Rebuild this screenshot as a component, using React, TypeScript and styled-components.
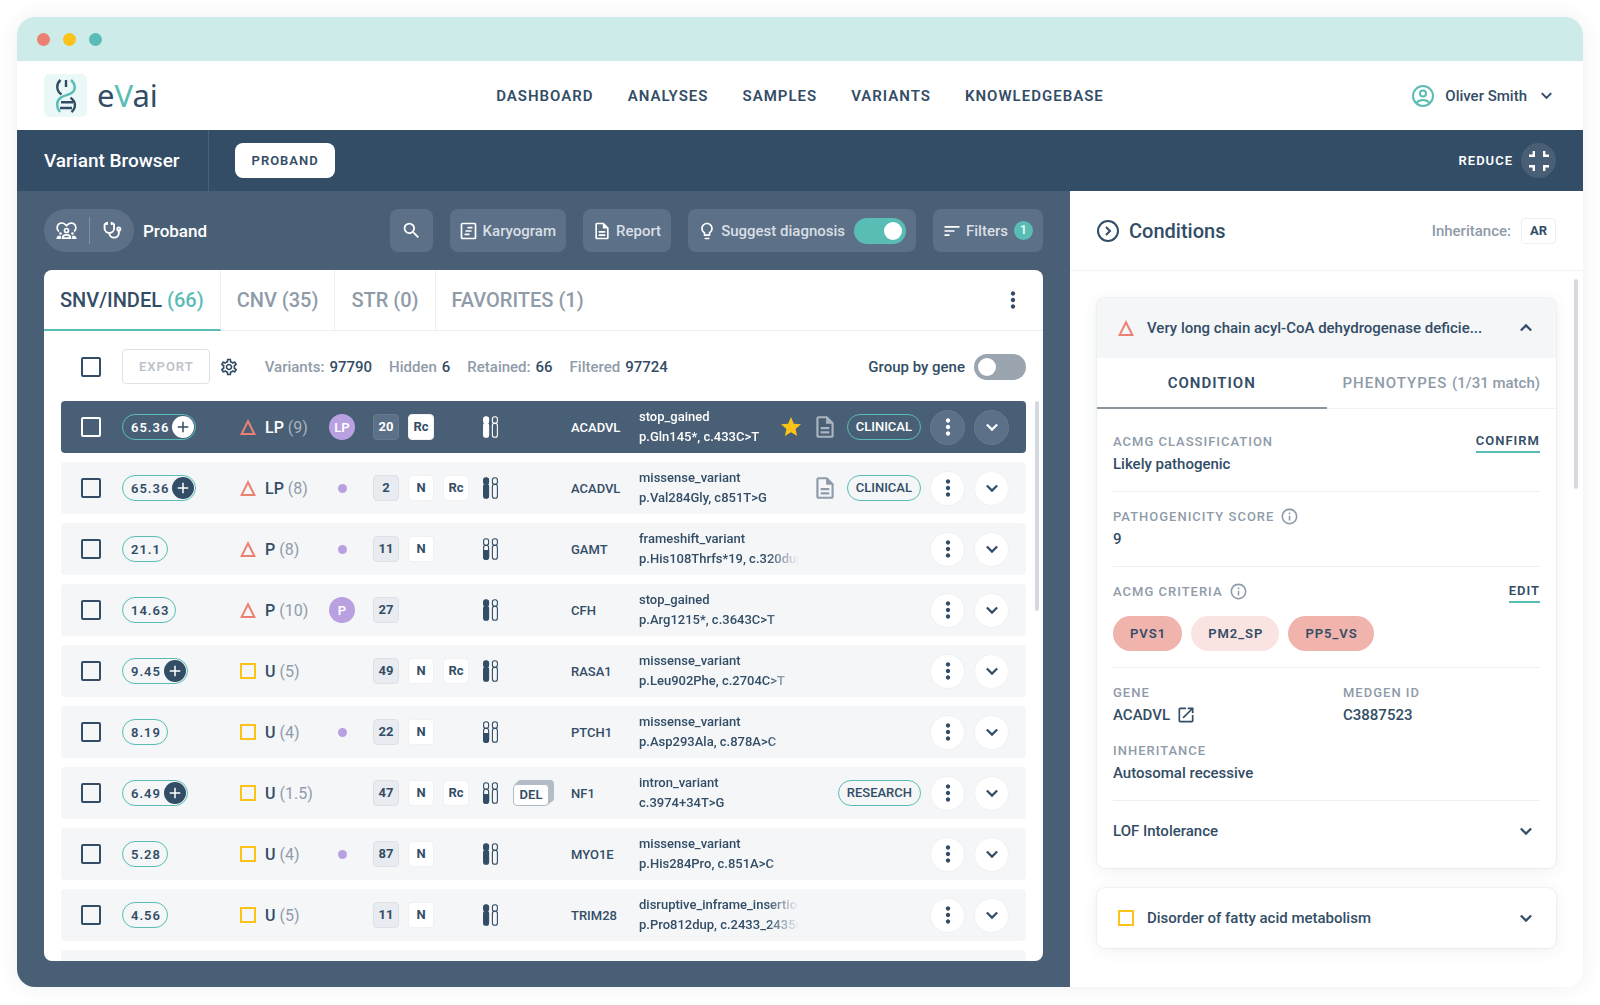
import React from "react";
import styled, { createGlobalStyle, css } from "styled-components";
import {
  MdAdd,
  MdLightbulbOutline,
  MdMoreVert,
  MdOpenInNew,
  MdOutlineDescription,
  MdOutlineInfo,
  MdOutlineSettings,
  MdSearch,
  MdSort,
  MdStar,
} from "react-icons/md";
import { Stethoscope } from "lucide-react";

const c = {
  navy: "#334d66",
  slate: "#495f76",
  slateSoft: "#5c7087",
  teal: "#5abdb5",
  mint: "#cdebe9",
  grey: "#8f9ba9",
  line: "#eceff1",
  row: "#f4f6f8",
  red: "#ec8173",
  yellow: "#fbc21a",
  purple: "#b9a1e1",
};

const GlobalStyle = createGlobalStyle`
  *, *::before, *::after { box-sizing: border-box; }
  body {
    margin: 0;
    background: #fff;
    color: ${c.navy};
    font-family: Roboto, "Liberation Sans", sans-serif;
    font-size: 15px;
    font-weight: 500;
  }
  button {
    font: inherit;
    color: inherit;
    background: none;
    border: 0;
    padding: 0;
    cursor: pointer;
  }
  a { color: inherit; text-decoration: none; }
  svg { display: block; flex: none; }
`;

/* ---------- Shell ---------- */

const Page = styled.div`
  height: 100vh;
  min-height: 1005px;
  padding: 17px 17px 18px;
`;

const Window = styled.div`
  height: 100%;
  display: flex;
  flex-direction: column;
  border-radius: 18px;
  overflow: hidden;
  background: #fff;
  box-shadow: 0 0 20px rgba(40, 50, 60, 0.08);
`;

const TitleBar = styled.div`
  flex: none;
  height: 44px;
  display: flex;
  align-items: center;
  gap: 13px;
  padding: 0 20px;
  background: ${c.mint};
`;

const Dot = styled.span<{ $color: string }>`
  width: 13px;
  height: 13px;
  border-radius: 50%;
  background: ${(p) => p.$color};
`;

const Header = styled.header`
  flex: none;
  height: 69px;
  display: grid;
  grid-template-columns: 1fr auto 1fr;
  align-items: center;
  padding: 0 27px;
`;

const Brand = styled.a`
  display: flex;
  align-items: center;
  gap: 10px;
`;

const BrandMark = styled.span`
  width: 43px;
  height: 43px;
  display: grid;
  place-items: center;
  border-radius: 5px;
  background: #ebf8f8;
`;

const BrandName = styled.span`
  font-family: "Noto Sans", sans-serif;
  font-size: 31px;
  font-weight: 400;
  line-height: 43px;
  em {
    font-style: normal;
    color: ${c.teal};
  }
`;

const Nav = styled.nav`
  display: flex;
  gap: 34px;
  font-size: 15px;
  font-weight: 600;
  letter-spacing: 1px;
`;

const UserButton = styled.button`
  justify-self: end;
  display: flex;
  align-items: center;
  gap: 11px;
  padding-right: 4px;
  svg:last-child { margin-left: 3px; }
`;

const SubBar = styled.div`
  flex: none;
  height: 61px;
  display: flex;
  align-items: stretch;
  padding: 0 27px;
  background: ${c.navy};
  color: #fff;
`;

const PageTitle = styled.h1`
  margin: 0;
  padding-right: 28px;
  border-right: 1px solid ${c.slate};
  font-size: 19px;
  font-weight: 500;
  line-height: 61px;
`;

const CapsButton = styled.button`
  font-size: 13px;
  font-weight: 600;
  letter-spacing: 1px;
`;

const ProbandButton = styled(CapsButton)`
  align-self: center;
  height: 35px;
  margin-left: 26px;
  padding: 0 16px 0 17px;
  border-radius: 8px;
  background: #fff;
  color: ${c.navy};
`;

const ReduceButton = styled(CapsButton)`
  margin-left: auto;
  display: flex;
  align-items: center;
  gap: 8px;
  color: #fff;
  span {
    width: 35px;
    height: 35px;
    display: grid;
    place-items: center;
    border-radius: 50%;
    background: ${c.slate};
  }
`;

const Body = styled.div`
  flex: 1;
  min-height: 0;
  display: grid;
  grid-template-columns: minmax(0, 1053fr) minmax(0, 513fr);
`;

/* ---------- Variant browser ---------- */

const Main = styled.main`
  display: flex;
  flex-direction: column;
  min-height: 0;
  padding: 0 27px 26px;
  background: ${c.slate};
`;

const Toolbar = styled.div`
  flex: none;
  height: 79px;
  display: flex;
  align-items: center;
  gap: 17px;
`;

const ViewSwitch = styled.div`
  height: 43px;
  display: flex;
  align-items: center;
  border-radius: 22px;
  background: ${c.slateSoft};
  color: #fff;
  button {
    width: 45px;
    height: 27px;
    display: grid;
    place-items: center;
  }
  button + button {
    border-left: 1px solid #7f8fa1;
  }
`;

const ViewName = styled.h2`
  flex: 1;
  margin: 0 0 0 -8px;
  color: #fff;
  font-size: 17px;
  font-weight: 500;
`;

const toolSurface = css`
  height: 43px;
  display: flex;
  align-items: center;
  gap: 4px;
  padding: 0 10px 0 9px;
  border-radius: 8px;
  background: ${c.slateSoft};
  color: #d9dfe5;
  svg { color: #fff; }
`;

const ToolButton = styled.button`
  ${toolSurface}
`;

const ToolLabel = styled.label`
  ${toolSurface}
  cursor: pointer;
`;

const SearchButton = styled(ToolButton)`
  padding: 0 11px;
`;

const Count = styled.span`
  width: 19px;
  height: 19px;
  margin-left: 2px;
  border-radius: 50%;
  background: ${c.teal};
  color: #fff;
  font-size: 12px;
  line-height: 19px;
  text-align: center;
`;

const Switch = styled.input`
  appearance: none;
  flex: none;
  width: 52px;
  height: 26px;
  margin: 0 0 0 5px;
  padding: 4px;
  display: flex;
  border-radius: 13px;
  background: #9aa5b0;
  cursor: pointer;
  &::before {
    content: "";
    width: 18px;
    height: 18px;
    border-radius: 50%;
    background: #fff;
  }
  &:checked {
    justify-content: flex-end;
    background: ${c.teal};
  }
`;

const Card = styled.section`
  flex: 1;
  min-height: 0;
  display: flex;
  flex-direction: column;
  border-radius: 8px;
  overflow: hidden;
  background: #fff;
`;

const TabBar = styled.div`
  flex: none;
  height: 61px;
  display: flex;
  padding-right: 17px;
  border-bottom: 1px solid ${c.line};
`;

const Tab = styled.button<{ $active?: boolean }>`
  height: 61px;
  padding: 0 16px;
  border-right: 1px solid ${c.line};
  border-bottom: 2px solid ${(p) => (p.$active ? c.teal : "transparent")};
  color: ${(p) => (p.$active ? c.navy : c.grey)};
  font-size: 20px;
  font-weight: 500;
  span { color: ${c.teal}; }
  &:nth-last-of-type(2) { border-right: 0; }
`;

const TabMenu = styled.button`
  margin-left: auto;
`;

const ListControls = styled.div`
  flex: none;
  display: flex;
  align-items: center;
  padding: 18px 17px 8px 37px;
`;

const CheckBox = styled.input<{ $light?: boolean }>`
  appearance: none;
  display: block;
  flex: none;
  width: 20px;
  height: 20px;
  margin: 0;
  border: 2px solid ${(p) => (p.$light ? "#fff" : c.navy)};
  border-radius: 2px;
  cursor: pointer;
  &:checked { background: ${c.teal}; }
`;

const ExportButton = styled(CapsButton)`
  height: 35px;
  margin: 0 9px 0 21px;
  padding: 0 15px 0 16px;
  border: 1px solid #dfe2e5;
  border-radius: 4px;
  color: #bcc3ca;
`;

const Stats = styled.div`
  flex: 1;
  display: flex;
  gap: 17px;
  margin-left: 26px;
  color: ${c.grey};
  span {
    display: flex;
    gap: 5px;
  }
  strong {
    color: ${c.navy};
    font-weight: 500;
  }
`;

const GroupLabel = styled.label`
  display: flex;
  align-items: center;
  gap: 4px;
`;

const ListArea = styled.div`
  flex: 1;
  min-height: 0;
  display: grid;
  grid-template-columns: minmax(0, 1fr) 4px;
  gap: 9px;
  padding: 0 4px 0 17px;
  overflow: hidden;
`;

const ScrollThumb = styled.div<{ $top: number }>`
  width: 4px;
  height: 210px;
  margin-top: ${(p) => p.$top}px;
  border-radius: 2px;
  background: #d6dade;
`;

const VariantTable = styled.table`
  width: 100%;
  table-layout: fixed;
  border-collapse: separate;
  border-spacing: 0 9px;
  align-self: start;
`;

const Col = styled.col<{ $w?: number }>`
  width: ${(p) => (p.$w ? `${p.$w}px` : "auto")};
`;

const Muted = styled.span`
  color: ${c.grey};
  font-weight: 400;
`;

const Inline = styled.div<{ $gap: number }>`
  display: flex;
  align-items: center;
  gap: ${(p) => p.$gap}px;
`;

const Rank = styled(Inline)`
  font-size: 16px;
`;

const Report = styled.span`
  color: ${c.grey};
`;

const Row = styled.tr<{ $selected?: boolean }>`
  color: ${(p) => (p.$selected ? "#fff" : c.navy)};
  td {
    height: 52px;
    padding: 0;
    vertical-align: middle;
    background: ${(p) => (p.$selected ? c.slate : c.row)};
  }
  td:first-child {
    padding-left: 20px;
    border-radius: 4px 0 0 4px;
  }
  td:last-child {
    padding-right: 17px;
    border-radius: 0 4px 4px 0;
  }
  ${Muted}, ${Report} {
    color: ${(p) => (p.$selected ? "#a9b4bf" : c.grey)};
  }
`;

const Score = styled.div`
  display: flex;
  align-items: center;
  width: max-content;
  height: 26px;
  gap: 3px;
  padding: 0 6px 0 8px;
  border: 1px solid ${c.teal};
  border-radius: 13px;
  font-size: 13px;
  font-weight: 600;
  letter-spacing: 1px;
  &:has(button) { padding-right: 1px; }
`;

const PlusButton = styled.button<{ $light?: boolean }>`
  width: 22px;
  height: 22px;
  display: grid;
  place-items: center;
  border-radius: 50%;
  background: ${(p) => (p.$light ? "#fff" : c.navy)};
  color: ${(p) => (p.$light ? c.navy : "#fff")};
`;

const Square = styled.span`
  flex: none;
  width: 16px;
  height: 16px;
  border: 2px solid ${c.yellow};
`;

const Verdict = styled.span<{ $small?: boolean }>`
  display: grid;
  place-items: center;
  width: ${(p) => (p.$small ? 9 : 26)}px;
  height: ${(p) => (p.$small ? 9 : 26)}px;
  margin: ${(p) => (p.$small ? "0 9px" : "0")};
  border-radius: 50%;
  background: ${c.purple};
  color: #fff;
  font-size: 13px;
  font-weight: 600;
`;

const Tag = styled.span<{ $kind: "count" | "countDark" | "white" }>`
  min-width: 26px;
  height: 26px;
  border: 1px solid
    ${(p) => ({ count: "#dde1e6", countDark: "#677a90", white: "#eff1f4" })[p.$kind]};
  border-radius: 4px;
  background: ${(p) => ({ count: "#e8ebef", countDark: "#5c7087", white: "#fff" })[p.$kind]};
  color: ${(p) => (p.$kind === "countDark" ? "#fff" : c.navy)};
  font-size: 13px;
  font-weight: 700;
  line-height: 24px;
  text-align: center;
`;

const DelTag = styled.span`
  display: block;
  width: 36px;
  height: 22px;
  margin-top: 4px;
  border: 1px solid #b4bdc7;
  border-radius: 4px;
  background: #fff;
  box-shadow: 1px -1px 0 #b4bdc7, 2px -2px 0 #b4bdc7, 3px -3px 0 #b4bdc7, 4px -4px 0 #b4bdc7, 5px -4px 0 #b4bdc7;
  font-size: 13px;
  font-weight: 600;
  line-height: 20px;
  text-align: center;
`;

const Gene = styled.div`
  font-size: 13px;
`;

const Change = styled.div`
  width: 160px;
  overflow: hidden;
  font-size: 13px;
  line-height: 20px;
  white-space: nowrap;
  mask-image: linear-gradient(to right, #000 128px, transparent 160px);
`;

const Actions = styled.div`
  display: flex;
  align-items: center;
  justify-content: flex-end;
  gap: 9px;
`;

const Badge = styled.span`
  height: 26px;
  padding: 0 8px;
  border: 1px solid ${c.teal};
  border-radius: 13px;
  font-size: 13px;
  line-height: 24px;
`;

const RoundButton = styled.button<{ $dark?: boolean }>`
  flex: none;
  width: 35px;
  height: 35px;
  display: grid;
  place-items: center;
  border: 1px solid ${(p) => (p.$dark ? "#677a90" : "#eff1f4")};
  border-radius: 50%;
  background: ${(p) => (p.$dark ? c.slateSoft : "#fff")};
`;

/* ---------- Conditions panel ---------- */

const Side = styled.aside`
  display: flex;
  flex-direction: column;
  min-height: 0;
  background: #fff;
`;

const SideHeader = styled.div`
  flex: none;
  height: 80px;
  display: flex;
  align-items: center;
  gap: 10px;
  padding: 0 27px;
  border-bottom: 1px solid #f1f3f4;
  color: ${c.grey};
`;

const SideTitle = styled.h2`
  flex: 1;
  margin: 0;
  color: ${c.navy};
  font-size: 20px;
  font-weight: 500;
`;

const ModeTag = styled.span`
  min-width: 35px;
  height: 26px;
  border: 1px solid #eceef0;
  border-radius: 4px;
  color: ${c.navy};
  font-size: 13px;
  font-weight: 700;
  line-height: 24px;
  text-align: center;
`;

const SideScroll = styled.div`
  flex: 1;
  min-height: 0;
  display: grid;
  grid-template-columns: minmax(0, 1fr) 4px;
  gap: 18px;
  padding: 0 5px 0 27px;
  overflow: hidden;
`;

const Stack = styled.div`
  display: flex;
  flex-direction: column;
  gap: 20px;
  padding-top: 27px;
`;

const Panel = styled.section`
  border-radius: 8px;
  background: #fff;
  box-shadow: 0 0 2px rgba(51, 77, 102, 0.18), 0 3px 16px rgba(51, 77, 102, 0.08);
`;

const PanelHeader = styled.button<{ $open?: boolean }>`
  width: 100%;
  height: 60px;
  display: flex;
  align-items: center;
  gap: 13px;
  padding: 0 24px 0 21px;
  border-radius: ${(p) => (p.$open ? "8px 8px 0 0" : "8px")};
  background: ${(p) => (p.$open ? c.row : "transparent")};
  text-align: left;
`;

const PanelTitle = styled.span`
  flex: 1;
  min-width: 0;
  overflow: hidden;
  white-space: nowrap;
  text-overflow: ellipsis;
`;

const PanelTabs = styled.div`
  display: flex;
`;

const PanelTab = styled.button<{ $active?: boolean }>`
  flex: 1 1 50%;
  height: 51px;
  border-bottom: ${(p) => (p.$active ? "2px solid #8d969c" : "1px solid #f1f3f4")};
  color: ${(p) => (p.$active ? c.navy : c.grey)};
  font-size: 15px;
  font-weight: ${(p) => (p.$active ? 600 : 500)};
  letter-spacing: 1px;
  white-space: nowrap;
  span { letter-spacing: 0; }
`;

const PanelBody = styled.div`
  padding: 8px 16px 7px;
`;

const Block = styled.div`
  display: flex;
  justify-content: space-between;
  align-items: flex-start;
  padding: 16px 0;
  border-bottom: 1px solid ${c.line};
`;

const Facts = styled.dl`
  display: grid;
  grid-template-columns: 230px 1fr;
  gap: 16px 0;
  margin: 0;
`;

const Fact = styled.div`
  display: flex;
  flex-direction: column;
  gap: 4px;
  dt {
    display: flex;
    align-items: center;
    gap: 6px;
    height: 16px;
    color: ${c.grey};
    font-size: 13px;
    letter-spacing: 1px;
    white-space: nowrap;
  }
  dd {
    display: flex;
    align-items: center;
    gap: 6px;
    margin: 0;
    line-height: 22px;
  }
`;

const Chips = styled.dd`
  && {
    gap: 9px;
    margin-top: 13px;
    line-height: 35px;
  }
`;

const Chip = styled.span<{ $soft?: boolean }>`
  height: 35px;
  padding: 0 16px 0 17px;
  border-radius: 18px;
  background: ${(p) => (p.$soft ? "#fae4e2" : "#f0b4ac")};
  font-size: 13px;
  font-weight: 600;
  letter-spacing: 1px;
`;

const LinkButton = styled(CapsButton)`
  height: 20px;
  padding-bottom: 4px;
  border-bottom: 2px solid ${c.teal};
`;

const Disclosure = styled.button`
  width: 100%;
  height: 60px;
  display: flex;
  align-items: center;
  justify-content: space-between;
  padding-right: 8px;
`;

/* ---------- Drawings ---------- */

const Helix = () => (
  <svg width="22" height="34" viewBox="0 0 22 34" fill="none" strokeWidth="2.4">
    <path d="M5.5 1C1 5 1 11.500 6.500 15.500" stroke={c.navy} />
    <path d="M16 1C20.500 5 21 10.500 17 13.800C14 16.200 9.500 16 6 18.500C1 22 1 28 5 33" stroke={c.teal} />
    <path d="M15.500 18.800C21 22.500 21.500 28.500 16.500 33" stroke={c.navy} />
    <path d="M11 1V8M6 23.200H18M5 29H17" stroke={c.navy} />
  </svg>
);

const UserIcon = () => (
  <svg width="22" height="22" viewBox="0 0 22 22" fill="none" stroke={c.teal} strokeWidth="2">
    <circle cx="11" cy="11" r="10" />
    <circle cx="11" cy="8.500" r="3" />
    <path d="M4.500 18c1.500-2.300 4-3 6.500-3s5 .7 6.500 3" />
  </svg>
);

const Chevron = ({ size = 12, up = false }: { size?: number; up?: boolean }) => (
  <svg width={size} height={size} viewBox="0 0 14 14" fill="none" stroke="currentColor" strokeWidth="2.600">
    <path d={up ? "M1 10l6-6 6 6" : "M1 4l6 6 6-6"} />
  </svg>
);

const ReduceIcon = () => (
  <svg width="20" height="20" viewBox="0 0 20 20" fill="none" stroke="currentColor" strokeWidth="2.400">
    <path d="M0 4.800h4.800V0M20 4.800h-4.800V0M0 15.200h4.800V20M20 15.200h-4.800V20" />
  </svg>
);

const FamilyIcon = () => (
  <svg width="21" height="18" viewBox="0 0 21 18" fill="none" stroke="currentColor" strokeWidth="1.700">
    <path d="M2.800 9.500C.6 7.500.6 4 2.700 2.200S8 .8 10.500 3.600C13 .8 16.300.4 18.300 2.200s2.100 5.300-.1 7.300" />
    <circle cx="10.500" cy="8.500" r="2" />
    <circle cx="4.500" cy="11.500" r="1.300" fill="currentColor" stroke="none" />
    <circle cx="16.500" cy="11.500" r="1.300" fill="currentColor" stroke="none" />
    <path d="M6.500 16.200c0-2.600 1.500-3.400 4-3.400s4 .8 4 3.400zM.5 16.200H4v-1.500H1.500M20.500 16.200H17v-1.500h2.500" />
  </svg>
);

const KaryogramIcon = () => (
  <svg width="20" height="20" viewBox="-1.500 -1.500 20 20" fill="none" stroke="currentColor" strokeWidth="1.700">
    <rect x="1" y="1" width="14" height="15" rx="1" />
    <path d="M7 5.200h5M5 8.500h6M4 11.800h5" />
  </svg>
);

const Triangle = () => (
  <svg width="16" height="16" viewBox="0 0 16 16" fill="none" stroke={c.red} strokeWidth="2">
    <path d="M8 2.300L14.400 15H1.600z" />
  </svg>
);

const ConditionsIcon = () => (
  <svg width="22" height="22" viewBox="0 0 22 22" fill="none" stroke={c.navy} strokeWidth="2">
    <circle cx="11" cy="11" r="10" />
    <path d="M9 7l4 4-4 4" />
  </svg>
);

const Chromosomes = ({ half = false }: { half?: boolean }) => (
  <svg width="16" height="22" viewBox="0 0 16 22" fill="none" stroke="currentColor" strokeWidth="1.100">
    <rect x=".6" y=".8" width="5" height="6.400" rx="2.300" fill={half ? "none" : "currentColor"} />
    <rect x=".6" y="7.200" width="5" height="14" rx="2.300" fill={half ? "none" : "currentColor"} />
    {half && <path d="M.6 12.500h5V19a2.300 2.300 0 0 1-5 0z" fill="currentColor" />}
    <rect x="9.400" y=".8" width="5" height="6.400" rx="2.300" />
    <rect x="9.400" y="7.200" width="5" height="14" rx="2.300" />
  </svg>
);

/* ---------- Data ---------- */

type Variant = {
  score: string;
  plus?: boolean;
  rank: "LP" | "P" | "U";
  points: string;
  verdict?: string;
  count: string;
  tags: string[];
  half?: boolean;
  del?: boolean;
  gene: string;
  effect: string;
  change: string;
  starred?: boolean;
  report?: boolean;
  badge?: string;
};

const variants: Variant[] = [
  { score: "65.36", plus: true, rank: "LP", points: "9", verdict: "LP", count: "20", tags: ["Rc"], gene: "ACADVL", effect: "stop_gained", change: "p.Gln145*, c.433C>T", starred: true, report: true, badge: "CLINICAL" },
  { score: "65.36", plus: true, rank: "LP", points: "8", verdict: "", count: "2", tags: ["N", "Rc"], gene: "ACADVL", effect: "missense_variant", change: "p.Val284Gly, c851T>G", report: true, badge: "CLINICAL" },
  { score: "21.1", rank: "P", points: "8", verdict: "", count: "11", tags: ["N"], half: true, gene: "GAMT", effect: "frameshift_variant", change: "p.His108Thrfs*19, c.320dup" },
  { score: "14.63", rank: "P", points: "10", verdict: "P", count: "27", tags: [], gene: "CFH", effect: "stop_gained", change: "p.Arg1215*, c.3643C>T" },
  { score: "9.45", plus: true, rank: "U", points: "5", count: "49", tags: ["N", "Rc"], gene: "RASA1", effect: "missense_variant", change: "p.Leu902Phe, c.2704C>T" },
  { score: "8.19", rank: "U", points: "4", verdict: "", count: "22", tags: ["N"], half: true, gene: "PTCH1", effect: "missense_variant", change: "p.Asp293Ala, c.878A>C" },
  { score: "6.49", plus: true, rank: "U", points: "1.5", count: "47", tags: ["N", "Rc"], half: true, del: true, gene: "NF1", effect: "intron_variant", change: "c.3974+34T>G", badge: "RESEARCH" },
  { score: "5.28", rank: "U", points: "4", verdict: "", count: "87", tags: ["N"], gene: "MYO1E", effect: "missense_variant", change: "p.His284Pro, c.851A>C" },
  { score: "4.56", rank: "U", points: "5", count: "11", tags: ["N"], gene: "TRIM28", effect: "disruptive_inframe_insertion", change: "p.Pro812dup, c.2433_2435dup" },
];

const columns = [61, 118, 89, 44, 110, 30, 58, 68, undefined, 246];

const VariantRow = ({ v, selected }: { v: Variant; selected: boolean }) => (
  <Row $selected={selected}>
    <td>
      <CheckBox type="checkbox" $light={selected} aria-label={`Select ${v.gene} ${v.change}`} />
    </td>
    <td>
      <Score>
        {v.score}
        {v.plus && (
          <PlusButton $light={selected} aria-label="More scores">
            <MdAdd size={18} />
          </PlusButton>
        )}
      </Score>
    </td>
    <td>
      <Rank $gap={9}>
        {v.rank === "U" ? <Square /> : <Triangle />}
        <span>
          {v.rank} <Muted>({v.points})</Muted>
        </span>
      </Rank>
    </td>
    <td>{v.verdict !== undefined && <Verdict $small={!v.verdict}>{v.verdict}</Verdict>}</td>
    <td>
      <Inline $gap={9}>
        <Tag $kind={selected ? "countDark" : "count"}>{v.count}</Tag>
        {v.tags.map((t) => (
          <Tag key={t} $kind="white">
            {t}
          </Tag>
        ))}
      </Inline>
    </td>
    <td>
      <Chromosomes half={v.half} />
    </td>
    <td>{v.del && <DelTag>DEL</DelTag>}</td>
    <td>
      <Gene>{v.gene}</Gene>
    </td>
    <td>
      <Change>
        <div>{v.effect}</div>
        <div>{v.change}</div>
      </Change>
    </td>
    <td>
      <Actions>
        {v.starred && <MdStar size={24} color={c.yellow} />}
        {v.report && (
          <Report>
            <MdOutlineDescription size={26} />
          </Report>
        )}
        {v.badge && <Badge>{v.badge}</Badge>}
        <RoundButton $dark={selected} aria-label="Variant menu">
          <MdMoreVert size={26} />
        </RoundButton>
        <RoundButton $dark={selected} aria-label="Expand variant">
          <Chevron />
        </RoundButton>
      </Actions>
    </td>
  </Row>
);

export default function App() {
  return (
    <>
      <GlobalStyle />
      <Page>
        <Window>
          <TitleBar>
            <Dot $color={c.red} />
            <Dot $color={c.yellow} />
            <Dot $color={c.teal} />
          </TitleBar>

          <Header>
            <Brand href="#">
              <BrandMark>
                <Helix />
              </BrandMark>
              <BrandName>
                e<em>V</em>ai
              </BrandName>
            </Brand>
            <Nav>
              <a href="#">DASHBOARD</a>
              <a href="#">ANALYSES</a>
              <a href="#">SAMPLES</a>
              <a href="#">VARIANTS</a>
              <a href="#">KNOWLEDGEBASE</a>
            </Nav>
            <UserButton>
              <UserIcon />
              Oliver Smith
              <Chevron size={11} />
            </UserButton>
          </Header>

          <SubBar>
            <PageTitle>Variant Browser</PageTitle>
            <ProbandButton>PROBAND</ProbandButton>
            <ReduceButton>
              REDUCE
              <span>
                <ReduceIcon />
              </span>
            </ReduceButton>
          </SubBar>

          <Body>
            <Main>
              <Toolbar>
                <ViewSwitch>
                  <button aria-label="Family view">
                    <FamilyIcon />
                  </button>
                  <button aria-label="Clinical view">
                    <Stethoscope size={19} strokeWidth={2.4} />
                  </button>
                </ViewSwitch>
                <ViewName>Proband</ViewName>
                <SearchButton aria-label="Search">
                  <MdSearch size={21} />
                </SearchButton>
                <ToolButton>
                  <KaryogramIcon />
                  Karyogram
                </ToolButton>
                <ToolButton>
                  <MdOutlineDescription size={20} />
                  Report
                </ToolButton>
                <ToolLabel>
                  <MdLightbulbOutline size={20} />
                  Suggest diagnosis
                  <Switch type="checkbox" defaultChecked />
                </ToolLabel>
                <ToolButton>
                  <MdSort size={20} />
                  Filters
                  <Count>1</Count>
                </ToolButton>
              </Toolbar>

              <Card>
                <TabBar>
                  <Tab $active>
                    SNV/INDEL <span>(66)</span>
                  </Tab>
                  <Tab>CNV (35)</Tab>
                  <Tab>STR (0)</Tab>
                  <Tab>FAVORITES (1)</Tab>
                  <TabMenu aria-label="List menu">
                    <MdMoreVert size={26} />
                  </TabMenu>
                </TabBar>

                <ListControls>
                  <CheckBox type="checkbox" aria-label="Select all variants" />
                  <ExportButton>EXPORT</ExportButton>
                  <button aria-label="Settings">
                    <MdOutlineSettings size={20} />
                  </button>
                  <Stats>
                    <span>
                      Variants: <strong>97790</strong>
                    </span>
                    <span>
                      Hidden <strong>6</strong>
                    </span>
                    <span>
                      Retained: <strong>66</strong>
                    </span>
                    <span>
                      Filtered <strong>97724</strong>
                    </span>
                  </Stats>
                  <GroupLabel>
                    Group by gene
                    <Switch type="checkbox" />
                  </GroupLabel>
                </ListControls>

                <ListArea>
                  <VariantTable aria-label="Variants">
                    <colgroup>
                      {columns.map((w, i) => (
                        <Col key={i} $w={w} />
                      ))}
                    </colgroup>
                    <tbody>
                      {variants.map((v, i) => (
                        <VariantRow key={i} v={v} selected={i === 0} />
                      ))}
                      <Row>
                        {columns.map((_, i) => (
                          <td key={i} />
                        ))}
                      </Row>
                    </tbody>
                  </VariantTable>
                  <ScrollThumb $top={9} />
                </ListArea>
              </Card>
            </Main>

            <Side>
              <SideHeader>
                <ConditionsIcon />
                <SideTitle>Conditions</SideTitle>
                Inheritance:
                <ModeTag>AR</ModeTag>
              </SideHeader>
              <SideScroll>
                <Stack>
                  <Panel>
                    <PanelHeader $open>
                      <Triangle />
                      <PanelTitle>Very long chain acyl-CoA dehydrogenase deficie...</PanelTitle>
                      <Chevron up />
                    </PanelHeader>
                    <PanelTabs>
                      <PanelTab $active>CONDITION</PanelTab>
                      <PanelTab>
                        PHENOTYPES <span>(1/31 match)</span>
                      </PanelTab>
                    </PanelTabs>
                    <PanelBody>
                      <Block>
                        <Facts>
                          <Fact>
                            <dt>ACMG CLASSIFICATION</dt>
                            <dd>Likely pathogenic</dd>
                          </Fact>
                        </Facts>
                        <LinkButton>CONFIRM</LinkButton>
                      </Block>
                      <Block>
                        <Facts>
                          <Fact>
                            <dt>
                              PATHOGENICITY SCORE <MdOutlineInfo size={19} />
                            </dt>
                            <dd>9</dd>
                          </Fact>
                        </Facts>
                      </Block>
                      <Block>
                        <Facts>
                          <Fact>
                            <dt>
                              ACMG CRITERIA <MdOutlineInfo size={19} />
                            </dt>
                            <Chips>
                              <Chip>PVS1</Chip>
                              <Chip $soft>PM2_SP</Chip>
                              <Chip>PP5_VS</Chip>
                            </Chips>
                          </Fact>
                        </Facts>
                        <LinkButton>EDIT</LinkButton>
                      </Block>
                      <Block>
                        <Facts>
                          <Fact>
                            <dt>GENE</dt>
                            <dd>
                              ACADVL
                              <a href="#" aria-label="Open ACADVL">
                                <MdOpenInNew size={20} />
                              </a>
                            </dd>
                          </Fact>
                          <Fact>
                            <dt>MEDGEN ID</dt>
                            <dd>C3887523</dd>
                          </Fact>
                          <Fact>
                            <dt>INHERITANCE</dt>
                            <dd>Autosomal recessive</dd>
                          </Fact>
                        </Facts>
                      </Block>
                      <Disclosure>
                        LOF Intolerance
                        <Chevron />
                      </Disclosure>
                    </PanelBody>
                  </Panel>
                  <Panel>
                    <PanelHeader>
                      <Square />
                      <PanelTitle>Disorder of fatty acid metabolism</PanelTitle>
                      <Chevron />
                    </PanelHeader>
                  </Panel>
                </Stack>
                <ScrollThumb $top={8} />
              </SideScroll>
            </Side>
          </Body>
        </Window>
      </Page>
    </>
  );
}
